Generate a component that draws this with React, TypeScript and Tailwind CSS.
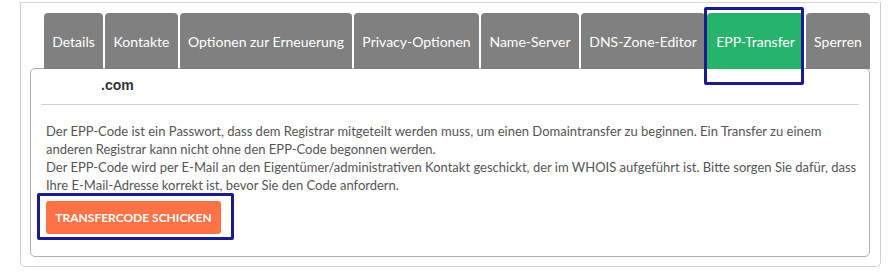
import React from "react";

const tabs: { label: string; w: string; active?: boolean }[] = [
  { label: "Details", w: "w-[59px]" },
  { label: "Kontakte", w: "w-[73px]" },
  { label: "Optionen zur Erneuerung", w: "w-[172px]" },
  { label: "Privacy-Optionen", w: "w-[125px]" },
  { label: "Name-Server", w: "w-[98px]" },
  { label: "DNS-Zone-Editor", w: "w-[124px]" },
  { label: "EPP-Transfer", w: "w-[97px]", active: true },
  { label: "Sperren", w: "w-[64px]" },
];

export default function App() {
  return (
    <div className="w-[896px] h-[276px] bg-white font-['Lato','Noto_Sans',sans-serif]">
      <div className="ml-[20px] w-[861px] border-x border-b border-[#cfcfcf] rounded-b-[5px] pl-[9px] pr-[10px] pb-[9px]">
        <div className="-ml-[9px] -mr-[8px] mt-[2px] h-px bg-[#d6d6d6]" />
        <div className="mt-[10px] pl-[14px] flex gap-[2px] relative z-10">
          {tabs.map((t) => (
            <div
              key={t.label}
              className={
                "relative h-[56px] flex items-center justify-center rounded-t-[4px] text-white text-[14px] whitespace-nowrap " +
                t.w +
                " " +
                (t.active ? "bg-[#26b36b]" : "bg-[#808080]")
              }
            >
              {t.label}
              {t.active && (
                <div className="absolute left-[-3px] top-[-6px] w-[100px] h-[78px] border-[3px] border-[#1b1b8c] rounded-[2px]" />
              )}
            </div>
          ))}
        </div>
        <div className="-mt-px border border-[#b0b0b0] rounded-[5px] px-[10px] pb-[22px]">
          <div className="h-[36px] border-b border-[#d0d0d0] flex items-center pb-[3px]">
            <span className="ml-[60px] font-['Liberation_Sans',Arial,sans-serif] font-bold text-[14px] text-[#333]">
              .com
            </span>
          </div>
          <div className="px-[5px]">
            <p className="mt-[17px] -mr-[14px] text-[13px] leading-[18px] text-[#555]">
              Der EPP-Code ist ein Passwort, dass dem Registrar mitgeteilt werden muss, um einen Domaintransfer zu beginnen. Ein Transfer zu einem anderen Registrar kann nicht ohne den EPP-Code begonnen werden.
              <br />
              Der EPP-Code wird per E-Mail an den Eigentümer/administrativen Kontakt geschickt, der im WHOIS aufgeführt ist. Bitte sorgen Sie dafür, dass Ihre E-Mail-Adresse korrekt ist, bevor Sie den Code anfordern.
            </p>
            <div className="mt-[7px] relative w-[175px]">
              <button className="w-[175px] h-[33px] rounded-[3px] bg-[#ff7245] text-white text-[12px] font-bold uppercase">
                Transfercode schicken
              </button>
              <div className="absolute left-[-9px] top-[-8px] w-[197px] h-[47px] border-[3px] border-[#1b1b8c] rounded-[2px]" />
            </div>
          </div>
        </div>
      </div>
    </div>
  );
}
